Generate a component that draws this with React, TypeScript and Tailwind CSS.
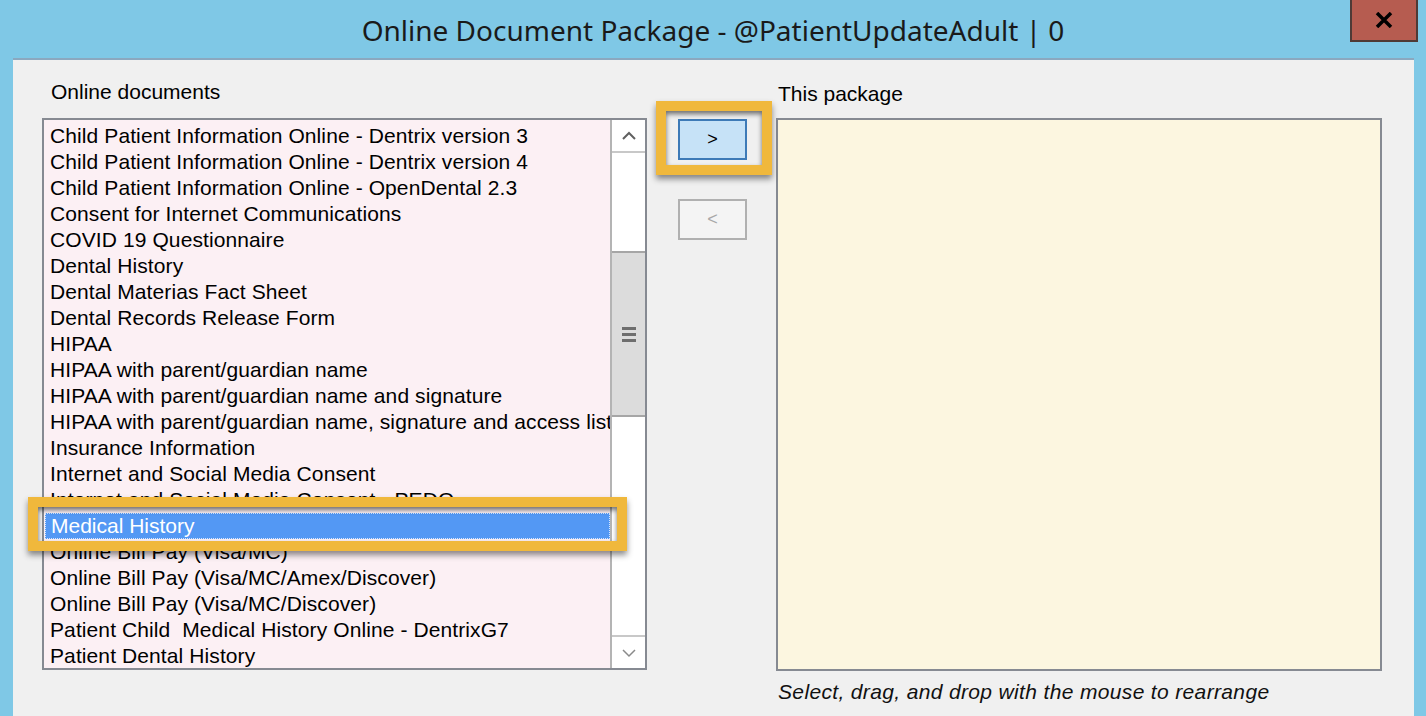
import React from "react";

const documents = [
  "Child Patient Information Online - Dentrix version 3",
  "Child Patient Information Online - Dentrix version 4",
  "Child Patient Information Online - OpenDental 2.3",
  "Consent for Internet Communications",
  "COVID 19 Questionnaire",
  "Dental History",
  "Dental Materias Fact Sheet",
  "Dental Records Release Form",
  "HIPAA",
  "HIPAA with parent/guardian name",
  "HIPAA with parent/guardian name and signature",
  "HIPAA with parent/guardian name, signature and access list",
  "Insurance Information",
  "Internet and Social Media Consent",
  "Internet and Social Media Consent - PEDO",
  "Medical History",
  "Online Bill Pay (Visa/MC)",
  "Online Bill Pay (Visa/MC/Amex/Discover)",
  "Online Bill Pay (Visa/MC/Discover)",
  "Patient Child\u00a0 Medical History Online - DentrixG7",
  "Patient Dental History",
];

const SELECTED = "Medical History";

function Scrollbar() {
  return (
    <div className="flex w-[35px] shrink-0 flex-col border-l-2 border-[#b4b4b4] bg-white">
      <div className="flex h-[33px] items-center justify-center border-b-2 border-[#c8c8c8]">
        <svg width="16" height="10" viewBox="0 0 16 10">
          <path d="M2 8 L8 2 L14 8" fill="none" stroke="#606060" strokeWidth="2" />
        </svg>
      </div>
      <div className="h-[98px]" />
      <div className="flex h-[166px] items-center justify-center border-y-2 border-[#a6a6a6] bg-[#dcdcdc]">
        <div className="flex flex-col gap-[3px]">
          <div className="h-[3px] w-[14px] bg-[#6e6e6e]" />
          <div className="h-[3px] w-[14px] bg-[#6e6e6e]" />
          <div className="h-[3px] w-[14px] bg-[#6e6e6e]" />
        </div>
      </div>
      <div className="flex-1" />
      <div className="flex h-[33px] items-center justify-center border-t-2 border-[#c8c8c8]">
        <svg width="16" height="10" viewBox="0 0 16 10">
          <path d="M2 2 L8 8 L14 2" fill="none" stroke="#8a8a8a" strokeWidth="1.5" />
        </svg>
      </div>
    </div>
  );
}

export default function App() {
  return (
    <div
      className="flex h-[716px] w-[1426px] flex-col overflow-hidden bg-[#7fc8e6] text-black"
      style={{ fontFamily: '"Liberation Sans", Arial, sans-serif' }}
    >
      {/* title bar */}
      <div className="relative flex h-[58px] shrink-0 items-center justify-center pt-[2px]">
        <span
          className="text-[28px] text-[#1a1a1a]"
          style={{ fontFamily: '"Noto Sans", "Open Sans", sans-serif' }}
        >
          Online Document Package - @PatientUpdateAdult | 0
        </span>
        <button
          type="button"
          className="absolute right-[8px] top-0 flex h-[42px] w-[68px] items-center justify-center border-2 border-t-0 border-[#4f3a36] bg-[#b65c50]"
        >
          <svg width="18" height="16" viewBox="0 0 18 16">
            <path d="M2 1 L16 15 M16 1 L2 15" stroke="#000" strokeWidth="3.5" />
          </svg>
        </button>
      </div>

      {/* client area */}
      <div className="relative ml-[13px] mr-[12px] flex flex-1 items-start border-t-2 border-[#8ba8bf] bg-[#f0f0f0] text-[21px]">
        {/* left list */}
        <div className="ml-[29px] flex w-[605px] flex-col pt-[20px]">
          <div className="h-[24px] pl-[9px] leading-[24px]">Online documents</div>
          <div className="mt-[14px] flex h-[552px] border-2 border-[#868a92] bg-[#fcf0f4]">
            <div className="flex-1 overflow-hidden pt-[3px]">
              {documents.map((d) =>
                d === SELECTED ? (
                  <div
                    key={d}
                    className="ml-[1px] h-[26px] whitespace-nowrap border border-dotted border-[#d8e8ff] bg-[#5398f4] pl-[5px] leading-[24px] text-white"
                  >
                    {d}
                  </div>
                ) : (
                  <div
                    key={d}
                    className="h-[26px] whitespace-nowrap pl-[6px] leading-[26px] tracking-[0.1px]"
                  >
                    {d}
                  </div>
                )
              )}
            </div>
            <Scrollbar />
          </div>
        </div>

        {/* move buttons */}
        <div className="ml-[31px] flex w-[69px] flex-col gap-[39px] pt-[59px]">
          <button
            type="button"
            className="flex h-[41px] items-center justify-center border-2 border-[#3d7ab7] bg-[#c6e2f7] text-[18px]"
          >
            &gt;
          </button>
          <button
            type="button"
            disabled
            className="flex h-[41px] items-center justify-center border-2 border-[#b0b0b0] bg-[#f4f4f4] text-[18px] text-[#a8a8a8]"
          >
            &lt;
          </button>
        </div>

        {/* right package */}
        <div className="ml-[29px] flex w-[606px] flex-col pt-[22px]">
          <div className="h-[24px] pl-[2px] leading-[24px]">This package</div>
          <div className="mt-[12px] h-[553px] border-2 border-[#868a92] bg-[#fcf6e0]" />
          <div className="mt-[9px] pl-[2px] leading-[24px] italic tracking-[0.35px] text-[#111]">
            Select, drag, and drop with the mouse to rearrange
          </div>
        </div>

        {/* callout highlights */}
        <div className="pointer-events-none absolute left-[15px] top-[437px] h-[54px] w-[599px] border-[10px] border-[#f0b83c] shadow-[0_4px_6px_rgba(0,0,0,0.45),inset_0_3px_5px_rgba(0,0,0,0.55)]" />
        <div className="pointer-events-none absolute left-[643px] top-[41px] h-[74px] w-[116px] border-[10px] border-[#f0b83c] shadow-[0_4px_6px_rgba(0,0,0,0.45),inset_0_3px_5px_rgba(0,0,0,0.55)]" />
      </div>
    </div>
  );
}
